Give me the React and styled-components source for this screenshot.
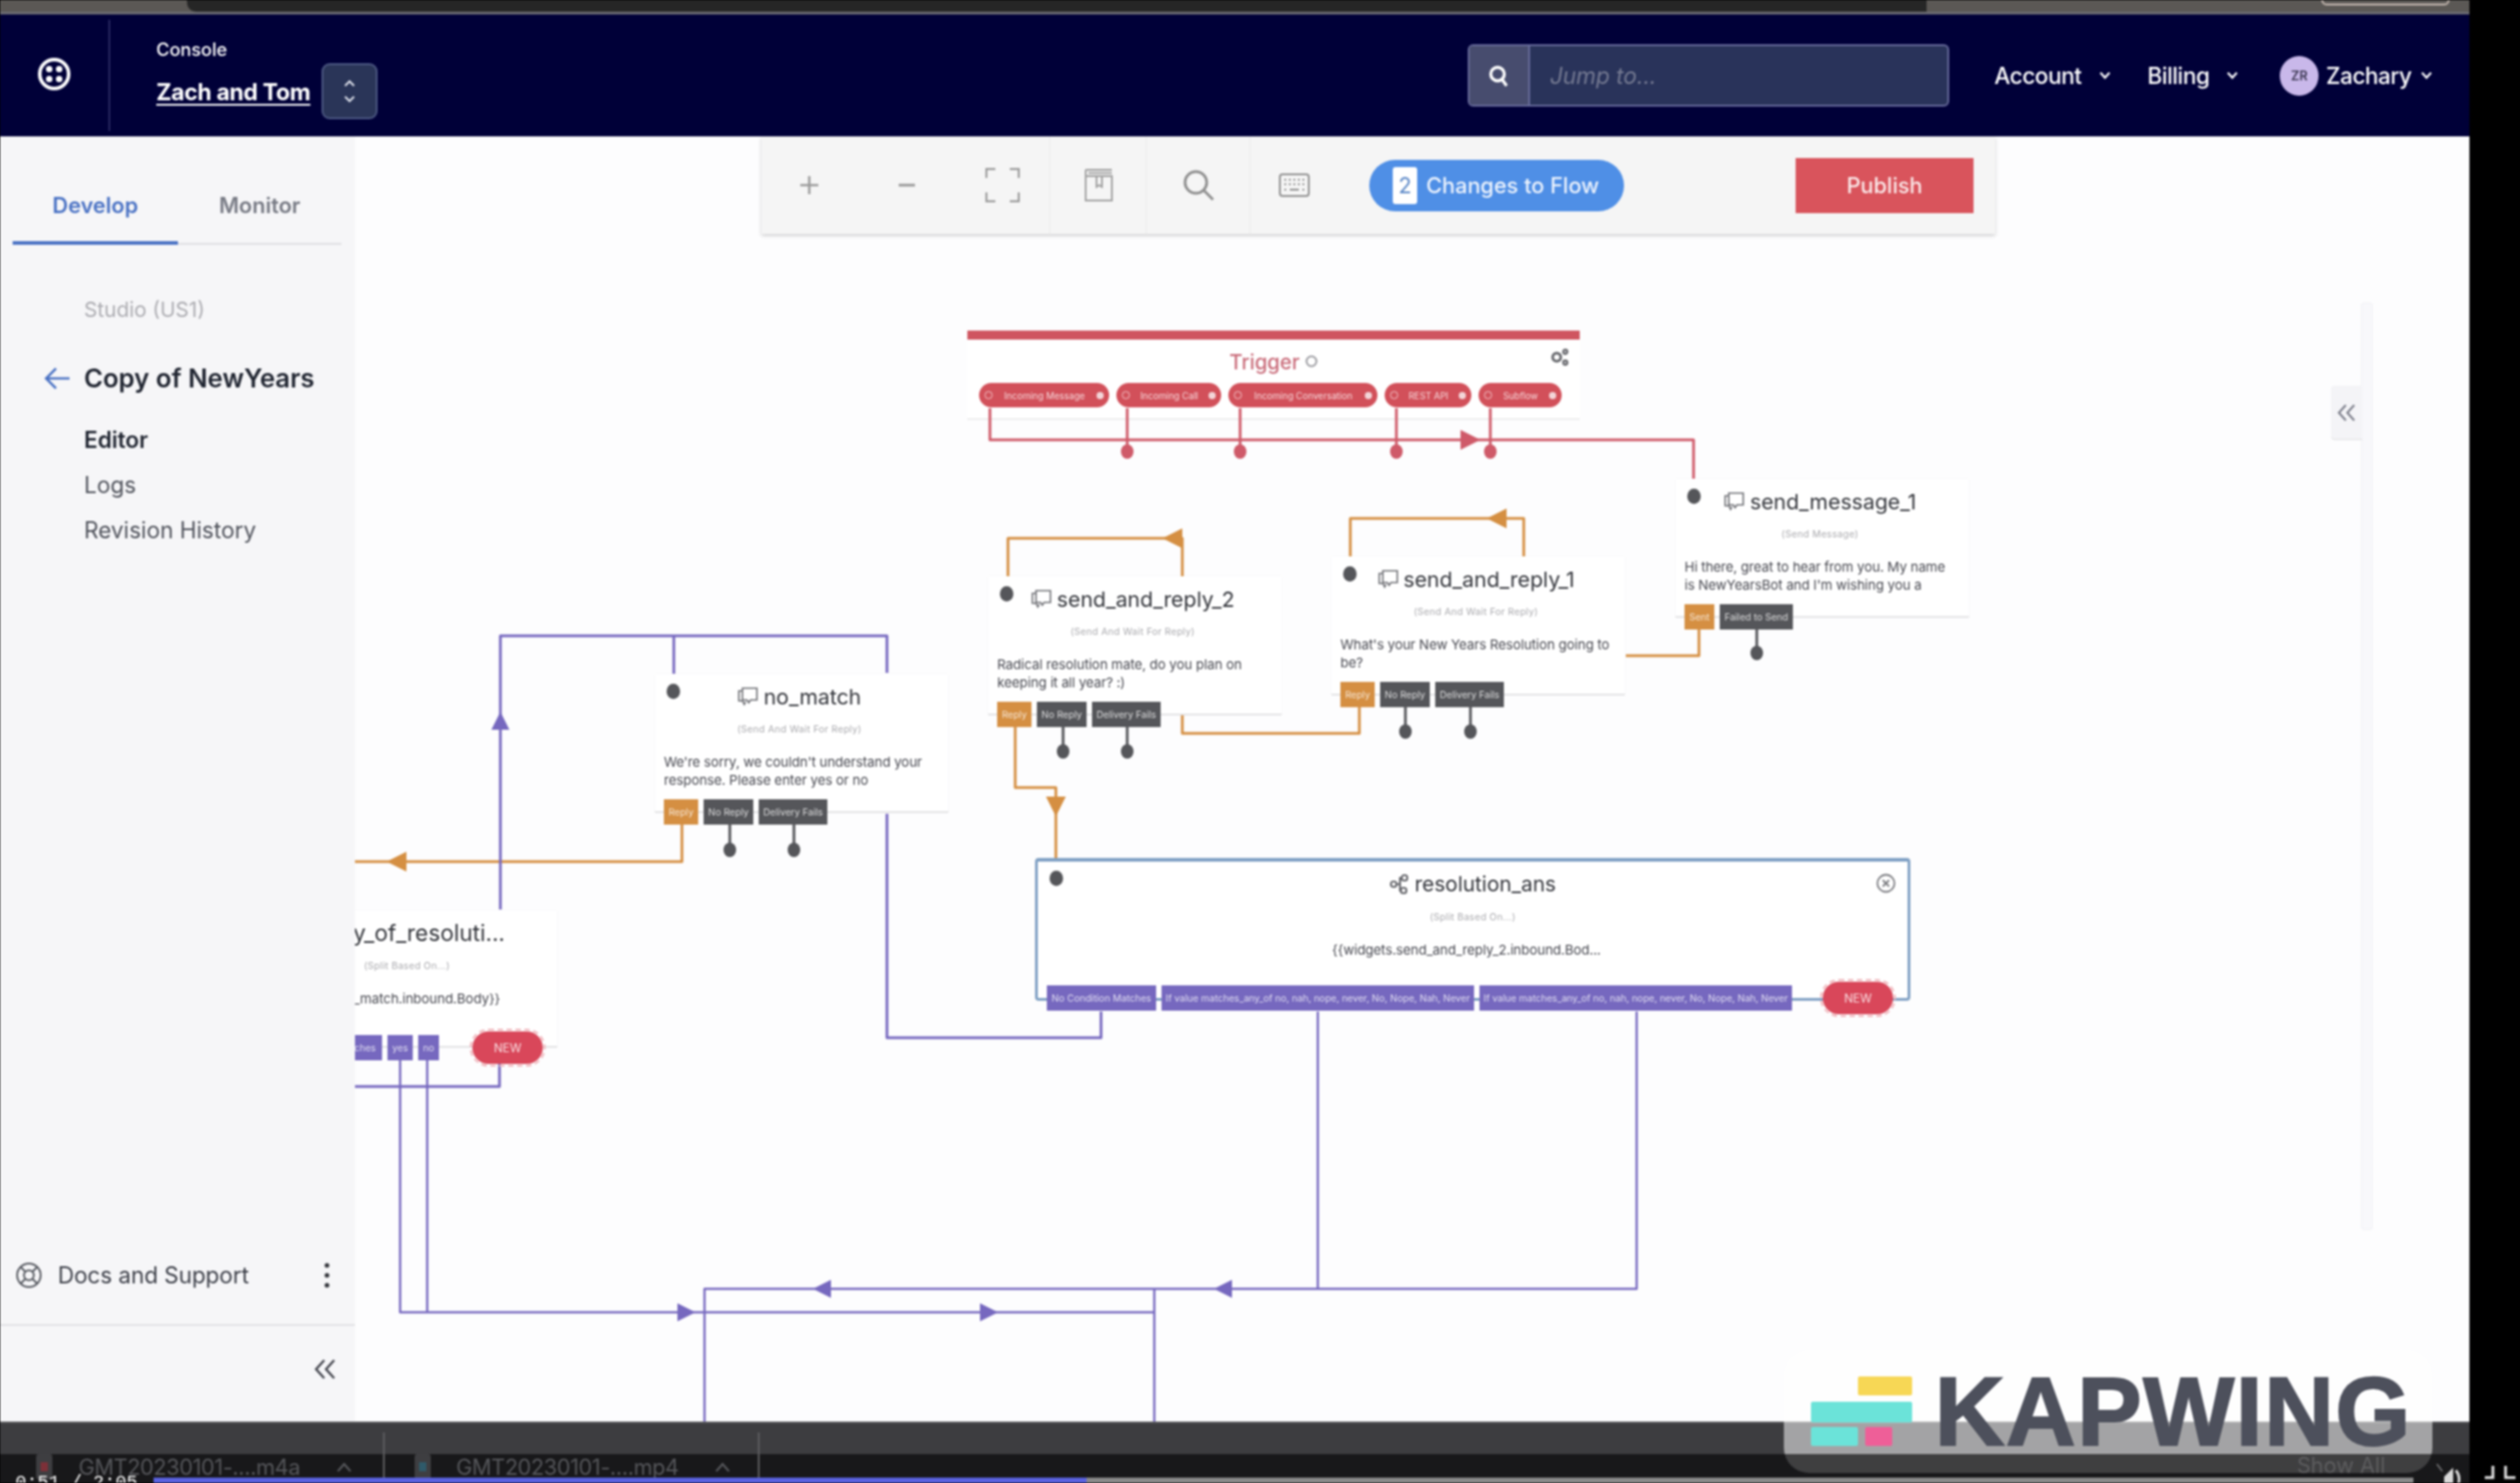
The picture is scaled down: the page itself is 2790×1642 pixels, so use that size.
import React from 'react';
import styled, { createGlobalStyle } from 'styled-components';

const GlobalStyle = createGlobalStyle`
  html, body { margin: 0; padding: 0; background: #000; }
  * { box-sizing: border-box; }
  body { font-family: Inter, "Liberation Sans", sans-serif; }
`;

const PURPLE = '#7668bf';
const ORANGE = '#d58f42';
const PINK = '#cf5a69';
const GREY = '#55565a';

const Page = styled.div`
  position: relative;
  display: flex;
  width: 2790px;
  height: 1642px;
  overflow: hidden;
  background: #000;
  filter: blur(0.9px);
`;

const Screen = styled.div`
  display: flex;
  flex-direction: column;
  width: 2734px;
  height: 100%;
`;

/* browser chrome above the recording */
const TopStrip = styled.div`
  position: relative;
  display: flex;
  flex: 0 0 16px;
  background: #5b5855;
  border-bottom: 3px solid #6a6a72;
`;

const TopDark = styled.div`
  width: 1926px;
  margin-left: 207px;
  background: #262626;
  border-radius: 0 0 0 10px;
`;

const TopButton = styled.div`
  position: absolute;
  left: 2570px;
  top: -6px;
  width: 142px;
  height: 12px;
  border: 2px solid #c9bcb4;
  border-radius: 6px;
`;

const Header = styled.header`
  display: flex;
  align-items: center;
  flex: 0 0 135px;
  background: #000038;
  color: #fff;
`;

const LogoCell = styled.div`
  display: flex;
  align-items: center;
  justify-content: center;
  width: 122px;
  height: 123px;
  padding-bottom: 4px;
  border-right: 2px solid #2a2a62;
`;

const Workspace = styled.div`
  display: flex;
  flex-direction: column;
  margin-left: 51px;
  padding-top: 8px;
`;

const ConsoleLabel = styled.div`
  font-size: 20px;
  font-weight: 500;
  line-height: 24px;
`;

const WorkspaceRow = styled.div`
  display: flex;
  align-items: center;
  gap: 12px;
  margin-top: 3px;
`;

const WorkspaceName = styled.a`
  font-size: 25.5px;
  font-weight: 700;
  letter-spacing: -0.4px;
  text-decoration: underline;
  text-underline-offset: 4px;
`;

const SwitchButton = styled.div`
  display: flex;
  align-items: center;
  justify-content: center;
  width: 62px;
  height: 62px;
  background: #2a3558;
  border: 2px solid #4e5a84;
  border-radius: 9px;
`;

const SearchBox = styled.div`
  display: flex;
  width: 533px;
  height: 69px;
  margin-left: auto;
  background: #29335a;
  border: 2px solid #686c9c;
  border-radius: 6px;
  overflow: hidden;
`;

const SearchIconCell = styled.div`
  display: flex;
  align-items: center;
  justify-content: center;
  width: 67px;
  background: #474c6e;
  border-right: 2px solid #686c9c;
`;

const SearchHint = styled.div`
  display: flex;
  align-items: center;
  padding-left: 22px;
  color: #757a92;
  font-size: 25px;
  font-style: italic;
`;

const HeaderMenu = styled.nav`
  display: flex;
  align-items: center;
  margin-left: 50px;
  margin-right: 41px;
  font-size: 25px;
  font-weight: 500;
`;

const MenuItem = styled.div`
  display: flex;
  align-items: center;
  gap: ${(p) => p.$chevron}px;
  margin-right: ${(p) => p.$gap}px;
  letter-spacing: -0.5px;
`;

const Avatar = styled.div`
  display: flex;
  align-items: center;
  justify-content: center;
  width: 43px;
  height: 44px;
  margin-right: 8px;
  border-radius: 50%;
  background: #c9b8ea;
  color: #3a3550;
  font-size: 14px;
  font-weight: 600;
`;

const Body = styled.div`
  display: flex;
  flex: 1;
  min-height: 0;
`;

const Sidebar = styled.aside`
  display: flex;
  flex-direction: column;
  flex: 0 0 393px;
  background: #f6f6f8;
`;

const Tabs = styled.div`
  display: flex;
  height: 120px;
  margin: 0 15px 0 14px;
  border-bottom: 2px solid #dedee2;
`;

const Tab = styled.div`
  display: flex;
  align-items: center;
  justify-content: center;
  width: ${(p) => p.$w}px;
  height: 120px;
  padding-top: 36px;
  color: ${(p) => (p.$active ? '#4a72c4' : '#777a84')};
  font-size: 24px;
  font-weight: 600;
  border-bottom: 4px solid ${(p) => (p.$active ? '#4a72c4' : 'transparent')};
`;

const SideNav = styled.div`
  display: flex;
  flex-direction: column;
  flex: 1;
  padding-left: 93px;
`;

const Studio = styled.div`
  margin-top: 57px;
  color: #adadb2;
  font-size: 23px;
  line-height: 30px;
`;

const FlowTitle = styled.div`
  position: relative;
  margin-top: 41px;
  color: #1f2430;
  font-size: 28.5px;
  font-weight: 600;
  line-height: 40px;
`;

const BackArrow = styled.svg`
  position: absolute;
  left: -45px;
  top: 6px;
`;

const NavLink = styled.div`
  margin-top: ${(p) => p.$top}px;
  color: ${(p) => (p.$active ? '#1f2430' : '#50535c')};
  font-size: 25px;
  font-weight: ${(p) => (p.$active ? 600 : 400)};
  line-height: 30px;
`;

const SideFooter = styled.div`
  display: flex;
  align-items: center;
  height: 110px;
  padding: 0 15px 0 17px;
  border-bottom: 2px solid #e2e2e5;
  color: #3c3f48;
  font-size: 25px;
`;

const FooterLabel = styled.span`
  margin-left: 17px;
  letter-spacing: -0.1px;
`;

const KebabIcon = styled.svg`
  margin-left: auto;
  margin-right: 13px;
`;

const CollapseRow = styled.div`
  display: flex;
  justify-content: flex-end;
  align-items: center;
  height: 106px;
  padding: 0 20px 10px 0;
`;

const Canvas = styled.main`
  position: relative;
  flex: 1;
  overflow: hidden;
  background: #fdfdfe;
`;

/* same coordinate system as the whole page, so diagram nodes read easily */
const Diagram = styled.div`
  position: absolute;
  left: -393px;
  top: -151px;
  width: 2790px;
  height: 1642px;
`;

const Edges = styled.svg`
  position: absolute;
  left: 0;
  top: 0;
`;

const Toolbar = styled.div`
  position: absolute;
  left: 843px;
  top: 151px;
  display: flex;
  align-items: center;
  width: 1366px;
  height: 108px;
  background: #f5f5f5;
  box-shadow: 0 2px 4px rgba(0, 0, 0, 0.18);
`;

const ToolCell = styled.div`
  display: flex;
  align-items: center;
  justify-content: center;
  width: ${(p) => p.$w}px;
  height: 108px;
  border-right: 2px solid ${(p) => (p.$rule ? '#f0f0f0' : 'transparent')};
  color: #8f8f8f;
`;

const ChangesPill = styled.div`
  display: flex;
  align-items: center;
  width: 282px;
  height: 57px;
  margin-left: 33px;
  padding-left: 26px;
  background: #4f8fe6;
  border-radius: 29px;
  color: #eef4fd;
  font-size: 24px;
  font-weight: 500;
  white-space: nowrap;
`;

const CountBadge = styled.span`
  display: flex;
  align-items: center;
  justify-content: center;
  width: 27px;
  height: 41px;
  margin-right: 10px;
  background: #fff;
  border-radius: 3px;
  color: #5b88c7;
  font-weight: 400;
`;

const PublishButton = styled.div`
  display: flex;
  align-items: center;
  justify-content: center;
  width: 197px;
  height: 61px;
  margin-left: 190px;
  background: #d9545c;
  color: #fbeaea;
  font-size: 24px;
  font-weight: 500;
`;

const RightRail = styled.div`
  position: absolute;
  left: 2614px;
  top: 335px;
  width: 13px;
  height: 1027px;
  background: #f8f8fb;
  border: 1px solid #f1f1f5;
  border-radius: 3px;
`;

const RailTab = styled.div`
  position: absolute;
  left: 2581px;
  top: 427px;
  display: flex;
  align-items: center;
  justify-content: center;
  width: 34px;
  height: 59px;
  background: #f4f4f7;
  border-radius: 4px 0 0 4px;
  box-shadow: 0 1px 1px rgba(0, 0, 0, 0.12);
`;

const TriggerCard = styled.div`
  position: absolute;
  left: 1071px;
  top: 366px;
  width: 678px;
  height: 99px;
  background: #fff;
  border-top: 10px solid #cf5560;
  border-bottom: 2px solid #eeeeee;
`;

const TriggerTitle = styled.div`
  display: flex;
  align-items: center;
  justify-content: center;
  gap: 6px;
  height: 48px;
  color: #c96c7a;
  font-size: 22.5px;
  font-weight: 500;
`;

const GearIcon = styled.svg`
  position: absolute;
  right: 11px;
  top: 9px;
`;

const PillRow = styled.div`
  display: flex;
  gap: 8px;
  padding-left: 13px;
`;

const TriggerPill = styled.div`
  display: flex;
  align-items: center;
  justify-content: space-between;
  width: ${(p) => p.$w}px;
  height: 27px;
  padding: 0 6px;
  background: #d2505a;
  border-radius: 14px;
  color: #f6d9dc;
  font-size: 10px;
  white-space: nowrap;
`;

const PillRing = styled.span`
  width: 9px;
  height: 9px;
  border: 1.5px solid #f3c9cd;
  border-radius: 50%;
`;

const PillInfo = styled.span`
  width: 8px;
  height: 8px;
  background: #f3d5d8;
  border-radius: 50%;
`;

const Node = styled.div`
  position: absolute;
  left: ${(p) => p.$x}px;
  top: ${(p) => p.$y}px;
  width: ${(p) => p.$w}px;
  height: ${(p) => p.$h}px;
  padding: 0 15px 0 10px;
  background: #fff;
  border-bottom: 2px solid #e4e4e6;
  box-shadow: 0 0 2px rgba(0, 0, 0, 0.05);
  text-align: ${(p) => (p.$split ? 'center' : 'left')};
`;

const SelectedNode = styled(Node)`
  padding: 0 10px;
  border: 3px solid #7fa0c4;
  border-top-width: 4px;
  border-radius: 4px;
`;

const Port = styled.span`
  position: absolute;
  left: ${(p) => p.$left}px;
  top: ${(p) => p.$top}px;
  width: 15px;
  height: 17px;
  background: ${GREY};
  border-radius: 50%;
`;

const NodeTitle = styled.div`
  display: flex;
  align-items: center;
  justify-content: center;
  gap: 5px;
  height: 50px;
  padding-right: ${(p) => p.$shift || 0}px;
  color: #33353b;
  font-size: ${(p) => p.$size || 23.5}px;
  font-weight: 400;
  white-space: nowrap;
`;

const NodeKind = styled.div`
  height: 24px;
  color: #a9a9ad;
  font-size: 10.5px;
  line-height: 24px;
  text-align: center;
  letter-spacing: 0.3px;
`;

const NodeText = styled.div`
  margin-top: 14px;
  padding-right: ${(p) => p.$shift || 0}px;
  color: #494a52;
  font-size: 14.85px;
  line-height: 20px;
  height: ${(p) => (p.$split ? 26 : 40)}px;
  letter-spacing: -0.12px;
  white-space: ${(p) => (p.$split ? 'nowrap' : 'normal')};
`;

const PortRow = styled.div`
  display: flex;
  align-items: center;
  gap: 6px;
  margin-top: ${(p) => p.$top}px;
`;

const PortButton = styled.div`
  display: flex;
  align-items: center;
  justify-content: center;
  flex: 0 0 ${(p) => p.$w}px;
  height: 28px;
  background: ${(p) => p.$bg};
  color: rgba(255, 255, 255, 0.78);
  font-size: 10.5px;
  white-space: nowrap;
  overflow: hidden;
`;

const NewPill = styled.div`
  display: flex;
  align-items: center;
  justify-content: center;
  width: 78px;
  height: 36px;
  margin-left: ${(p) => p.$gap}px;
  background: #d9475a;
  border-radius: 18px;
  outline: 2px dashed #f0b4ba;
  outline-offset: 1px;
  color: #f9dfe2;
  font-size: 13px;
`;

const CloseIcon = styled.svg`
  position: absolute;
  right: 13px;
  top: 13px;
`;

const BottomBar = styled.div`
  display: flex;
  flex: 0 0 36px;
  background: #3d3d40;
  border-top: 2px solid #555558;
`;

const DownloadBar = styled.div`
  display: flex;
  flex: 0 0 32px;
  background: #18181a;
  color: #55565a;
  font-size: 24px;
`;

const DownloadItem = styled.div`
  display: flex;
  align-items: center;
  flex: 0 0 ${(p) => p.$w}px;
  height: 50px;
  margin-top: -24px;
  padding: 26px 0 0 ${(p) => p.$pad}px;
  border-right: 2px solid #5c5c5f;
`;

const DownloadName = styled.span`
  margin: 0 40px 0 ${(p) => p.$gap}px;
  font-size: 24px;
  letter-spacing: -0.4px;
  white-space: nowrap;
`;

const ShowAll = styled.span`
  margin-left: auto;
  margin-right: 93px;
  line-height: 26px;
  color: #3c3c3e;
  font-size: 24px;
`;

const SeekTrack = styled.div`
  position: absolute;
  left: 170px;
  bottom: 0;
  width: 2502px;
  height: 6px;
  background: #8a8a8a;
`;

const SeekFill = styled.div`
  width: ${(p) => p.$pct}%;
  height: 100%;
  background: #5a62e0;
`;

const TimeLabel = styled.span`
  position: absolute;
  left: 17px;
  top: 1630px;
  color: #fff;
  font-family: "Liberation Mono", monospace;
  font-size: 20.5px;
  line-height: 24px;
  white-space: nowrap;
`;

const PlayerIcon = styled.svg`
  position: absolute;
  left: ${(p) => p.$x}px;
  top: ${(p) => p.$y}px;
`;

const Watermark = styled.div`
  position: absolute;
  left: 1975px;
  top: 1495px;
  display: flex;
  width: 718px;
  height: 136px;
  padding: 29px 0 0 30px;
  background: linear-gradient(rgba(255, 255, 255, 0.53) 0 115px, rgba(255, 255, 255, 0.17) 115px);
  border-radius: 28px;
`;

const KapwingMark = styled.svg`
  flex: 0 0 112px;
`;

const KapwingName = styled.div`
  margin-left: 25px;
  color: #4d505c;
  font-family: "Liberation Sans", sans-serif;
  font-size: 107px;
  font-weight: 700;
  line-height: 78px;
  letter-spacing: 1.6px;
  -webkit-text-stroke: 2px #4d505c;
`;

const ChevronDown = () => (
  <svg width="13" height="9" viewBox="0 0 13 9" fill="none" stroke="#fff" strokeWidth="2.4">
    <path d="M1.5 1.5 6.5 7l5-5.5" />
  </svg>
);

const ChatIcon = () => (
  <svg width="24" height="24" viewBox="0 0 24 24" fill="none" stroke="#6a6b70" strokeWidth="1.6">
    <path d="M6 3h16v13h-7l-2 3-2-3H6z" />
    <path d="M6 6H2v11h4l2 4 1.5-3" />
  </svg>
);

const SplitIcon = () => (
  <svg width="23" height="24" viewBox="0 0 23 24" fill="none" stroke="#66676c" strokeWidth="2.2">
    <rect x="14" y="2" width="6" height="6" rx="2.5" />
    <rect x="2" y="9" width="6" height="6" rx="2.5" />
    <rect x="13" y="16" width="6" height="6" rx="2.5" />
    <path d="M8 12h4V5h2M12 12v7h1" />
  </svg>
);

const Collapse = ({ color, size = 26 }) => (
  <svg width={size} height={size} viewBox="0 0 26 26" fill="none" stroke={color} strokeWidth="2.6">
    <path d="M12 3 3 13l9 10M23 3l-9 10 9 10" />
  </svg>
);

const Line = ({ d, color, width = 3 }) => (
  <path d={d} fill="none" stroke={color} strokeWidth={width} strokeLinejoin="round" />
);

const Dot = ({ x, y, color = GREY }) => <ellipse cx={x} cy={y} rx="7" ry="8" fill={color} />;

const Arrow = ({ x, y, dir, color, size = 11 }) => {
  const pts = {
    right: `${x - size},${y - size} ${x + size},${y} ${x - size},${y + size}`,
    left: `${x + size},${y - size} ${x - size},${y} ${x + size},${y + size}`,
    up: `${x - size},${y + size} ${x},${y - size} ${x + size},${y + size}`,
    down: `${x - size},${y - size} ${x},${y + size} ${x + size},${y - size}`,
  };
  return <polygon points={pts[dir]} fill={color} />;
};

const triggerPills = [
  { label: 'Incoming Message', w: 144 },
  { label: 'Incoming Call', w: 116 },
  { label: 'Incoming Conversation', w: 165 },
  { label: 'REST API', w: 96 },
  { label: 'Subflow', w: 92 },
];

const widgets = [
  {
    name: 'send_message_1',
    kind: '(Send Message)',
    text: 'Hi there, great to hear from you. My name is NewYearsBot and I\'m wishing you a',
    x: 1855, y: 530, ports: [['Sent', 33, ORANGE], ['Failed to Send', 81, GREY]],
  },
  {
    name: 'send_and_reply_1',
    kind: '(Send And Wait For Reply)',
    text: 'What\'s your New Years Resolution going to be?',
    x: 1474, y: 616, ports: [['Reply', 38, ORANGE], ['No Reply', 55, GREY], ['Delivery Fails', 76, GREY]],
  },
  {
    name: 'send_and_reply_2',
    kind: '(Send And Wait For Reply)',
    text: 'Radical resolution mate, do you plan on keeping it all year? :)',
    x: 1094, y: 638, ports: [['Reply', 38, ORANGE], ['No Reply', 55, GREY], ['Delivery Fails', 76, GREY]],
  },
  {
    name: 'no_match',
    kind: '(Send And Wait For Reply)',
    text: 'We\'re sorry, we couldn\'t understand your response. Please enter yes or no',
    x: 725, y: 746, ports: [['Reply', 38, ORANGE], ['No Reply', 55, GREY], ['Delivery Fails', 76, GREY]],
  },
];

const FlowEdges = () => (
  <Edges width="2790" height="1642" viewBox="0 0 2790 1642">
    {/* trigger */}
    <Line color={PINK} d="M1096 452V487H1875V530" />
    <Line color={PINK} d="M1248 452V500M1373 452V500M1546 452V500M1650 452V500" />
    <Dot x={1248} y={500} color={PINK} />
    <Dot x={1373} y={500} color={PINK} />
    <Dot x={1546} y={500} color={PINK} />
    <Dot x={1650} y={500} color={PINK} />
    <Arrow x={1628} y={487} dir="right" color={PINK} />

    {/* orange reply loops */}
    <Line color={ORANGE} d="M1881 695V726H1800" />
    <Line color={ORANGE} d="M1495 620V574H1687V620" />
    <Arrow x={1657} y={574} dir="left" color={ORANGE} />
    <Line color={ORANGE} d="M1116 640V596H1309V640" />
    <Arrow x={1298} y={596} dir="left" color={ORANGE} />
    <Line color={ORANGE} d="M1309 792V812H1505V782" />
    <Line color={ORANGE} d="M1124 804V872H1169V950" />
    <Arrow x={1169} y={893} dir="down" color={ORANGE} />
    <Line color={ORANGE} d="M755 913V954H393" />
    <Arrow x={439} y={954} dir="left" color={ORANGE} />

    {/* grey failure ports */}
    <Line color={GREY} d="M1945 695V723M1556 782V810M1628 782V810M1177 804V832M1248 804V832M808 913V941M879 913V941" />
    <Dot x={1945} y={723} />
    <Dot x={1556} y={810} />
    <Dot x={1628} y={810} />
    <Dot x={1177} y={832} />
    <Dot x={1248} y={832} />
    <Dot x={808} y={941} />
    <Dot x={879} y={941} />

    {/* purple split branches */}
    <Line color={PURPLE} d="M554 1007V704H982V745" />
    <Line color={PURPLE} d="M746 704V748" />
    <Line color={PURPLE} d="M982 901V1149H1219V1120" />
    <Arrow x={554} y={798} dir="up" color={PURPLE} size={10} />
    <Line color={PURPLE} d="M553 1177V1203H393" />
    <Line color={PURPLE} width={2.5} d="M443 1173V1453H1277M473 1173V1453" />
    <Arrow x={760} y={1453} dir="right" color={PURPLE} size={10} />
    <Arrow x={1095} y={1453} dir="right" color={PURPLE} size={10} />
    <Line color={PURPLE} width={2.5} d="M780 1574V1427H1812V1120M1459 1120V1427M1278 1427V1574" />
    <Arrow x={910} y={1427} dir="left" color={PURPLE} size={10} />
    <Arrow x={1354} y={1427} dir="left" color={PURPLE} size={10} />
  </Edges>
);

const App = () => (
  <Page>
    <GlobalStyle />
    <Screen>
      <TopStrip>
        <TopDark />
        <TopButton />
      </TopStrip>

      <Header>
        <LogoCell>
          <svg width="38" height="38" viewBox="0 0 38 38" fill="#fff">
            <circle cx="19" cy="19" r="16" fill="none" stroke="#fff" strokeWidth="4" />
            <circle cx="13.5" cy="13.5" r="3.6" />
            <circle cx="24.5" cy="13.5" r="3.6" />
            <circle cx="13.5" cy="24.5" r="3.6" />
            <circle cx="24.5" cy="24.5" r="3.6" />
          </svg>
        </LogoCell>
        <Workspace>
          <ConsoleLabel>Console</ConsoleLabel>
          <WorkspaceRow>
            <WorkspaceName>Zach and Tom</WorkspaceName>
            <SwitchButton>
              <svg width="16" height="30" viewBox="0 0 16 30" fill="none" stroke="#dfe2ec" strokeWidth="2.2">
                <path d="M3 9l5-5 5 5M3 21l5 5 5-5" />
              </svg>
            </SwitchButton>
          </WorkspaceRow>
        </Workspace>

        <SearchBox>
          <SearchIconCell>
            <svg width="24" height="28" viewBox="0 0 24 28" fill="none" stroke="#fff" strokeWidth="3.4">
              <circle cx="11" cy="12" r="7.5" />
              <path d="M16 18l5 7" />
            </svg>
          </SearchIconCell>
          <SearchHint>Jump to...</SearchHint>
        </SearchBox>

        <HeaderMenu>
          <MenuItem $chevron={19} $gap={41}>Account <ChevronDown /></MenuItem>
          <MenuItem $chevron={19} $gap={46}>Billing <ChevronDown /></MenuItem>
          <Avatar>ZR</Avatar>
          <MenuItem $chevron={10} $gap={0}>Zachary <ChevronDown /></MenuItem>
        </HeaderMenu>
      </Header>

      <Body>
        <Sidebar>
          <Tabs>
            <Tab $w={183} $active>Develop</Tab>
            <Tab $w={181}>Monitor</Tab>
          </Tabs>
          <SideNav>
            <Studio>Studio (US1)</Studio>
            <FlowTitle>
              <BackArrow width="30" height="28" viewBox="0 0 30 28" fill="none" stroke="#4a72c4" strokeWidth="2.6">
                <path d="M14 3 3 14l11 11M3 14h26" />
              </BackArrow>
              Copy of NewYears
            </FlowTitle>
            <NavLink $top={33} $active>Editor</NavLink>
            <NavLink $top={20}>Logs</NavLink>
            <NavLink $top={20}>Revision History</NavLink>
          </SideNav>
          <SideFooter>
            <svg width="30" height="30" viewBox="0 0 30 30" fill="none" stroke="#55585f" strokeWidth="2">
              <circle cx="15" cy="15" r="13" />
              <circle cx="15" cy="15" r="5.5" />
              <path d="M6 6l5.5 5.5M24 6l-5.5 5.5M6 24l5.5-5.5M24 24l-5.5-5.5" />
            </svg>
            <FooterLabel>Docs and Support</FooterLabel>
            <KebabIcon width="6" height="28" viewBox="0 0 6 28" fill="#33353b">
              <circle cx="3" cy="3" r="2.6" />
              <circle cx="3" cy="14" r="2.6" />
              <circle cx="3" cy="25" r="2.6" />
            </KebabIcon>
          </SideFooter>
          <CollapseRow>
            <Collapse color="#44464e" />
          </CollapseRow>
        </Sidebar>

        <Canvas>
          <Diagram>
            <RightRail />
            <RailTab>
              <Collapse color="#7a7c88" size={22} />
            </RailTab>

            <TriggerCard>
              <TriggerTitle>
                Trigger
                <svg width="14" height="14" viewBox="0 0 14 14" fill="none" stroke="#9a9a9f" strokeWidth="2">
                  <circle cx="7" cy="7" r="5.5" />
                </svg>
              </TriggerTitle>
              <GearIcon width="22" height="21" viewBox="0 0 22 21" fill="none" stroke="#66676c" strokeWidth="3">
                <circle cx="7.5" cy="10.5" r="4.5" />
                <circle cx="17" cy="4.5" r="2.2" strokeWidth="2.4" />
                <circle cx="17" cy="16.5" r="2.2" strokeWidth="2.4" />
              </GearIcon>
              <PillRow>
                {triggerPills.map((pill) => (
                  <TriggerPill key={pill.label} $w={pill.w}>
                    <PillRing />
                    {pill.label}
                    <PillInfo />
                  </TriggerPill>
                ))}
              </PillRow>
            </TriggerCard>

            <FlowEdges />

            {widgets.map((w) => (
              <Node key={w.name} $x={w.x} $y={w.y} $w={325} $h={154}>
                <Port $left={13} $top={11} />
                <NodeTitle>
                  <ChatIcon />
                  {w.name}
                </NodeTitle>
                <NodeKind>{w.kind}</NodeKind>
                <NodeText>{w.text}</NodeText>
                <PortRow $top={11}>
                  {w.ports.map(([label, width, bg]) => (
                    <PortButton key={label} $w={width} $bg={bg}>{label}</PortButton>
                  ))}
                </PortRow>
              </Node>
            ))}

            <Node $x={289} $y={1008} $w={328} $h={152} $split>
              <NodeTitle $shift={23} $size={25}>
                <SplitIcon />
                copy_of_resoluti...
              </NodeTitle>
              <NodeKind>(Split Based On...)</NodeKind>
              <NodeText $split $shift={44}>{'{{widgets.no_match.inbound.Body}}'}</NodeText>
              <PortRow $top={20}>
                <PortButton $w={124} $bg={PURPLE}>No Condition Matches</PortButton>
                <PortButton $w={28} $bg={PURPLE}>yes</PortButton>
                <PortButton $w={23} $bg={PURPLE}>no</PortButton>
                <NewPill $gap={31}>NEW</NewPill>
              </PortRow>
            </Node>

            <SelectedNode $x={1146} $y={950} $w={969} $h={158} $split>
              <Port $left={13} $top={10} />
              <NodeTitle $size={23}>
                <SplitIcon />
                resolution_ans
              </NodeTitle>
              <NodeKind>(Split Based On...)</NodeKind>
              <NodeText $split $shift={14}>{'{{widgets.send_and_reply_2.inbound.Bod...'}</NodeText>
              <PortRow $top={19}>
                <PortButton $w={121} $bg={PURPLE}>No Condition Matches</PortButton>
                <PortButton $w={346} $bg={PURPLE}>If value matches_any_of no, nah, nope, never, No, Nope, Nah, Never</PortButton>
                <PortButton $w={346} $bg={PURPLE}>If value matches_any_of no, nah, nope, never, No, Nope, Nah, Never</PortButton>
                <NewPill $gap={28}>NEW</NewPill>
              </PortRow>
              <CloseIcon width="22" height="22" viewBox="0 0 22 22" fill="none" stroke="#77787d" strokeWidth="1.8">
                <circle cx="11" cy="11" r="9.5" />
                <path d="M7.5 7.5l7 7M14.5 7.5l-7 7" />
              </CloseIcon>
            </SelectedNode>

            <Toolbar>
              <ToolCell $w={108}>
                <svg width="24" height="24" viewBox="0 0 24 24" stroke="#9a9a9a" strokeWidth="2.6"><path d="M12 2v20M2 12h20" /></svg>
              </ToolCell>
              <ToolCell $w={107}>
                <svg width="20" height="6" viewBox="0 0 20 6" stroke="#9a9a9a" strokeWidth="3"><path d="M1 3h18" /></svg>
              </ToolCell>
              <ToolCell $w={105} $rule>
                <svg width="38" height="38" viewBox="0 0 38 38" fill="none" stroke="#9a9a9a" strokeWidth="2.4">
                  <path d="M1 11V1h10M27 1h10v10M37 27v10H27M11 37H1V27" />
                </svg>
              </ToolCell>
              <ToolCell $w={107} $rule>
                <svg width="32" height="38" viewBox="0 0 32 38" fill="none" stroke="#a0a0a0" strokeWidth="2">
                  <path d="M2 9V3a1 1 0 0 1 1-1h28M2 9h29v27H2zM5 5.5h26M14 9v12l3-2 3 2V9" />
                </svg>
              </ToolCell>
              <ToolCell $w={115} $rule>
                <svg width="36" height="36" viewBox="0 0 36 36" fill="none" stroke="#8f8f8f" strokeWidth="3">
                  <circle cx="15" cy="15" r="12" />
                  <path d="M24 24l10 10" />
                </svg>
              </ToolCell>
              <ToolCell $w={98}>
                <svg width="34" height="26" viewBox="0 0 34 26" fill="none" stroke="#8f8f8f" strokeWidth="2">
                  <rect x="1" y="1" width="32" height="24" rx="3" />
                  <path d="M6 7h2M11 7h2M16 7h2M21 7h2M26 7h2M6 12h2M11 12h2M16 12h2M21 12h2M26 12h2M6 18h2M12 18h10M26 18h2" />
                </svg>
              </ToolCell>
              <ChangesPill>
                <CountBadge>2</CountBadge>
                Changes to Flow
              </ChangesPill>
              <PublishButton>Publish</PublishButton>
            </Toolbar>
          </Diagram>
        </Canvas>
      </Body>

      <BottomBar />
      <DownloadBar>
        <DownloadItem $w={426} $pad={37}>
          <svg width="25" height="30" viewBox="0 0 25 30" fill="#3e3e41"><rect x="3" y="1" width="18" height="28" rx="3" /><rect x="8" y="10" width="8" height="10" fill="#7d3038" /></svg>
          <DownloadName $gap={25}>GMT20230101-....m4a</DownloadName>
          <svg width="18" height="12" viewBox="0 0 18 12" fill="none" stroke="#55565a" strokeWidth="2.4"><path d="M2 11l7-8 7 8" /></svg>
        </DownloadItem>
        <DownloadItem $w={415} $pad={30}>
          <svg width="25" height="30" viewBox="0 0 25 30" fill="#3e3e41"><rect x="3" y="1" width="18" height="28" rx="3" /><rect x="8" y="10" width="8" height="10" fill="#2f5a6a" /></svg>
          <DownloadName $gap={24}>GMT20230101-....mp4</DownloadName>
          <svg width="18" height="12" viewBox="0 0 18 12" fill="none" stroke="#55565a" strokeWidth="2.4"><path d="M2 11l7-8 7 8" /></svg>
        </DownloadItem>
        <ShowAll>Show All</ShowAll>
      </DownloadBar>
    </Screen>

    <Watermark>
      <KapwingMark width="112" height="77" viewBox="0 0 112 77">
        <rect x="52" y="0" width="60" height="21" rx="2" fill="#f7d755" />
        <rect x="0" y="28" width="112" height="23" rx="2" fill="#6be3d9" />
        <rect x="0" y="56" width="52" height="21" rx="2" fill="#6be3d9" />
        <rect x="60" y="56" width="30" height="21" rx="2" fill="#ee5f98" />
      </KapwingMark>
      <KapwingName>KAPWING</KapwingName>
    </Watermark>

    <SeekTrack>
      <SeekFill $pct={41.3} />
    </SeekTrack>
    <TimeLabel>0:51 / 2:05</TimeLabel>
    <PlayerIcon $x={2690} $y={1616} width="40" height="26" viewBox="0 0 40 26" fill="none">
      <path d="M8 5l6 8" stroke="#6a6a6c" strokeWidth="2" />
      <path d="M16 26V19l10-10v17z" fill="#d8d8d8" />
      <path d="M29 12q5 6 3 14" stroke="#d8d8d8" strokeWidth="3" />
    </PlayerIcon>
    <PlayerIcon $x={2750} $y={1622} width="36" height="18" viewBox="0 0 36 18" fill="none" stroke="#e6e6e6" strokeWidth="3">
      <path d="M10 1v13H1M24 1v13h11" />
    </PlayerIcon>
  </Page>
);

export default App;
